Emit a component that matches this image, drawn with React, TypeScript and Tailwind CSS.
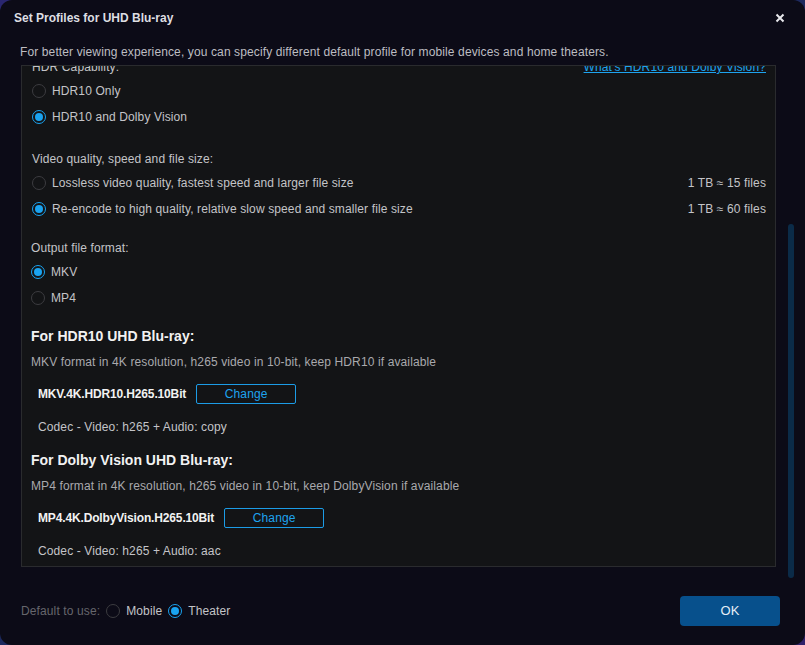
function Radio({ checked }: { checked?: boolean }) {
  return checked ? (
    <span className="flex h-[14px] w-[14px] shrink-0 items-center justify-center rounded-full border-[1.5px] border-[#1aa3f0]">
      <span className="h-[8px] w-[8px] rounded-full bg-[#1aa3f0]" />
    </span>
  ) : (
    <span className="h-[14px] w-[14px] shrink-0 rounded-full border-[1.5px] border-[#3c3c40]" />
  )
}

function Option({ label, checked, note }: { label: string; checked?: boolean; note?: string }) {
  return (
    <div className="flex h-[26px] items-center gap-[6px]">
      <Radio checked={checked} />
      <span>{label}</span>
      {note && <span className="ml-auto">{note}</span>}
    </div>
  )
}

function Profile({ title, desc, name, codec }: { title: string; desc: string; name: string; codec: string }) {
  return (
    <>
      <div className="flex h-[24px] items-center text-[14px] font-bold tracking-normal text-[#f2f2f2]">{title}</div>
      <div className="flex h-[28px] items-center text-[#a9a9ad]">{desc}</div>
      <div className="flex h-[36px] items-center gap-[10px] pl-[7px]">
        <span className="font-bold tracking-[-0.15px] text-[#f2f2f2]">{name}</span>
        <button className="h-[20px] w-[100px] rounded-[2px] border border-[#1c9ce6] text-[#1ea3ee]">Change</button>
      </div>
      <div className="flex h-[30px] items-center pl-[7px]">{codec}</div>
    </>
  )
}

export default function App() {
  return (
    <div className="h-[645px] w-[805px] bg-[linear-gradient(135deg,#2a2670,#1b2a5c_50%,#30206a)] font-['Liberation_Sans',Arial,sans-serif] text-[12px] tracking-[0.12px] text-[#c4c4c8]">
      <div className="flex h-full flex-col rounded-[12px] bg-[#0c0b17]">
        <div className="flex h-[36px] items-center justify-between pl-[14px] pr-[20px]">
          <span className="font-bold tracking-normal text-[#dedee2]">Set Profiles for UHD Blu-ray</span>
          <svg width="10" height="10" viewBox="0 0 10 10" className="text-[#e8e8ec]">
            <path d="M1.5 1.5 L8.5 8.5 M8.5 1.5 L1.5 8.5" stroke="currentColor" strokeWidth="2" />
          </svg>
        </div>
        <div className="h-[29px] pl-[20px] pt-[8px] leading-[16px] text-[#bdbdc2]">
          For better viewing experience, you can specify different default profile for mobile devices and home theaters.
        </div>
        <div className="flex h-[513px]">
          <div className="ml-[21px] mb-[11px] flex-1 overflow-hidden border border-[#2a2b2e] bg-[#131416]">
            <div className="-mt-[10px] pl-[9px] pr-[9px]">
              <div className="flex h-[22px] items-center justify-between">
                <span className="pl-[1px]">HDR Capability:</span>
                <span className="text-[#1ea3ee] underline">What's HDR10 and Dolby Vision?</span>
              </div>
              <div className="pl-[1px]">
                <Option label="HDR10 Only" />
                <Option checked label="HDR10 and Dolby Vision" />
              </div>
              <div className="mt-[18px] flex h-[22px] items-center pl-[1px]">Video quality, speed and file size:</div>
              <div className="pl-[1px]">
                <Option label="Lossless video quality, fastest speed and larger file size" note="1 TB ≈ 15 files" />
                <Option checked label="Re-encode to high quality, relative slow speed and smaller file size" note="1 TB ≈ 60 files" />
              </div>
              <div className="mt-[15px] flex h-[22px] items-center">Output file format:</div>
              <Option checked label="MKV" />
              <Option label="MP4" />
              <div className="mt-[13px]">
                <Profile
                  title="For HDR10 UHD Blu-ray:"
                  desc="MKV format in 4K resolution, h265 video in 10-bit, keep HDR10 if available"
                  name="MKV.4K.HDR10.H265.10Bit"
                  codec="Codec - Video: h265 + Audio: copy"
                />
              </div>
              <div className="mt-[6px]">
                <Profile
                  title="For Dolby Vision UHD Blu-ray:"
                  desc="MP4 format in 4K resolution, h265 video in 10-bit, keep DolbyVision if available"
                  name="MP4.4K.DolbyVision.H265.10Bit"
                  codec="Codec - Video: h265 + Audio: aac"
                />
              </div>
            </div>
          </div>
          <div className="ml-[12px] mr-[11px] w-[6px] pt-[159px]">
            <div className="h-[354px] rounded-[3px] bg-[#0b2b48]" />
          </div>
        </div>
        <div className="flex flex-1 items-start justify-between pl-[21px] pr-[25px] pt-[18px]">
          <div className="flex h-[30px] items-center">
            <span className="mr-[6px] text-[#66666c]">Default to use:</span>
            <Radio />
            <span className="ml-[6px] mr-[6px]">Mobile</span>
            <Radio checked />
            <span className="ml-[6px]">Theater</span>
          </div>
          <button className="h-[30px] w-[100px] rounded-[4px] bg-[#07508c] text-[13px] text-[#e6eef6]">OK</button>
        </div>
      </div>
    </div>
  )
}
